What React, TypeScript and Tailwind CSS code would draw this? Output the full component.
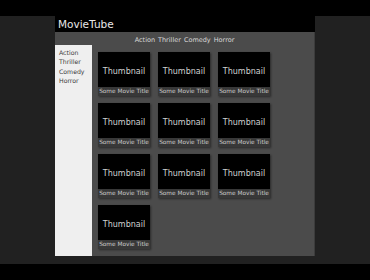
const genres = ["Action", "Thriller", "Comedy", "Horror"];
const movies = Array.from({ length: 10 }, (_, i) => ({ id: i, title: "Some Movie Title" }));

export default function App() {
  return (
    <div className="h-[280px] w-[370px] bg-black pt-[16px] font-['DejaVu_Sans',sans-serif]">
      <div className="h-[248px] bg-[#212121]">
        <div className="mx-auto w-[260px]">
          <header className="h-[16px] bg-black pl-[3px] text-[10.5px] leading-[16px] text-[#e8e8e8]">
            MovieTube
          </header>
          <div className="h-[224px] bg-[#4b4b4b] border-r border-[#3c3c3c]">
            <nav className="flex h-[13px] items-center justify-center gap-[3px] pt-[4px] text-[6.5px] text-[#d8d8d8]">
              {genres.map((g) => (
                <span key={g}>{g}</span>
              ))}
            </nav>
            <div className="flex h-[211px]">
              <aside className="w-[37px] bg-[#efefef] pl-[4px] pt-[3px] text-[6.2px] leading-[9.3px] text-[#3a3a3a]">
                {genres.map((g) => (
                  <div key={g}>{g}</div>
                ))}
              </aside>
              <main className="grid grid-cols-[52px_52px_52px] content-start gap-x-[8px] gap-y-[7px] pl-[6px] pt-[7px]">
                {movies.map((m) => (
                  <div key={m.id} className="flex flex-col shadow-[1px_1px_2px_rgba(0,0,0,0.45)]">
                    <div className="flex h-[35px] items-center justify-center bg-black pt-[4px] text-[8px] text-[#d0d0d0]">
                      Thumbnail
                    </div>
                    <div className="flex h-[9px] items-center justify-center bg-[#383838] text-[5.8px] text-[#cccccc]">
                      {m.title}
                    </div>
                  </div>
                ))}
              </main>
            </div>
          </div>
        </div>
      </div>
    </div>
  );
}
